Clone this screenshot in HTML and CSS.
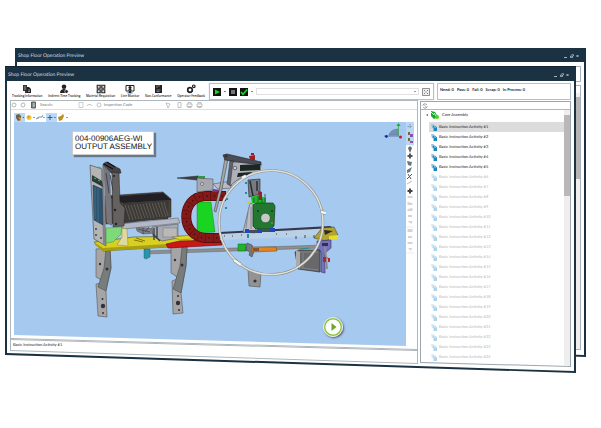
FILE: index.html
```html
<!DOCTYPE html>
<html lang="en">
<head>
    <meta charset="UTF-8">
    <meta name="viewport" content="width=device-width, initial-scale=1.0">
    <title>Shop Floor Operation Preview</title>
    <link rel="stylesheet" href="styles.css">
</head>
<body>

<!-- Shared icons -->
<svg class="sprite" aria-hidden="true">
    <symbol id="doc" viewBox="0 0 7 8">
        <path d="M0 0h3l1 1v4H1z" fill="#9fcbe0"/>
        <path d="M2 2h3l2 2v4H3V4H2z" fill="#1686c4"/>
        <path d="M4 2l2 2H4z" fill="#e3f3fb"/>
    </symbol>
    <symbol id="winbuttons" viewBox="0 0 18 6">
        <path d="M1 4.5h3M13.5 2l2 2m0-2l-2 2" stroke="#c6d2da" stroke-width=".8"/>
        <path d="M7.5 3h2v1.5h-2zM8.500 1.700h2v1.500" fill="none" stroke="#c6d2da" stroke-width=".7"/>
    </symbol>
    <symbol id="printer" viewBox="0 0 7 6">
        <path d="M1 2h5v2.500H1zM2 2V.5h3V2M2 4v1.500h3V4" fill="none" stroke="#aaa" stroke-width=".7"/>
    </symbol>
</svg>

<div class="desktop">
    <section class="window back">
        <header class="titlebar">
            <span>Shop Floor Operation Preview</span>
            <svg class="winbuttons"><use href="#winbuttons"/></svg>
        </header>
        <div class="window-body">
            <div class="back-counter"></div>
            <div class="back-tree"><div class="back-scroll"></div></div>
        </div>
    </section>

    <section class="window front">
        <header class="titlebar">
            <span>Shop Floor Operation Preview</span>
            <svg class="winbuttons"><use href="#winbuttons"/></svg>
        </header>
        <div class="window-body">
            <div class="ribbon">
                <nav class="actions">
                    <button>
                        <svg viewBox="0 0 10 10"><path d="M1 1h4v2h1v6H3V7H1z" fill="#333"/><path d="M5 3h2l2 2v4H5z" fill="#222"/><path d="M2 3h2M2 5h2M6 6h2M6 7.500h2" stroke="#ddd" stroke-width=".6"/></svg>
                        Tracking Information
                    </button>
                    <button>
                        <svg viewBox="0 0 10 10"><circle cx="5" cy="2.800" r="2.300" fill="#222"/><path d="M1 9c0-3 2-4 4-4s3 1 3 4z" fill="#222"/><circle cx="7.500" cy="7.500" r="1.800" fill="#222" stroke="#fff" stroke-width=".6"/></svg>
                        Indirect Time Tracking
                    </button>
                    <button>
                        <svg viewBox="0 0 10 10"><path d="M1.200 1.200h3v3h-3zM5.800 1.200h3v3h-3zM1.200 5.800h3v3h-3zM5.800 5.800h3v3h-3z" fill="#ddd" stroke="#222" stroke-width="1.100"/></svg>
                        Material Requisition
                    </button>
                    <button>
                        <svg viewBox="0 0 10 10"><path d="M1 1.500h8v5.500H1z" fill="#fff" stroke="#222" stroke-width="1"/><circle cx="5" cy="3.500" r="1.500" fill="#222"/><path d="M3 6.500c0-2 4-2 4 0zM4 7h2v1.500h1.500v.8h-5v-.8H4z" fill="#222"/></svg>
                        Line Monitor
                    </button>
                    <button>
                        <svg viewBox="0 0 10 10"><path d="M2 1h7v8H2z" fill="#222"/><path d="M4 1v3M6 1v2M3.500 6h4M3.500 7.500h3" stroke="#bbb" stroke-width=".6"/></svg>
                        Non-Conformance
                    </button>
                    <button>
                        <svg viewBox="0 0 10 10"><circle cx="4" cy="6" r="2.300" fill="none" stroke="#222" stroke-width="1.700"/><circle cx="7.800" cy="2.300" r="1.300" fill="none" stroke="#222" stroke-width="1.200"/></svg>
                        Operator Feedback
                    </button>
                </nav>

                <div class="runbox">
                    <button class="run" aria-label="Start"><svg viewBox="0 0 8 8"><path d="M2 1.500l5 2.500-5 2.500z" fill="#0be01e"/></svg></button>
                    <i class="dot"></i>
                    <button class="run" aria-label="Stop"><svg viewBox="0 0 8 8"><path d="M2 2h4v4H2z" fill="#777"/></svg></button>
                    <button class="run" aria-label="Complete"><svg viewBox="0 0 8 8"><path d="M1 4l2 2.300L7.200 1.500" fill="none" stroke="#0be01e" stroke-width="1.600"/></svg></button>
                    <i class="dot"></i>
                    <select class="runselect" aria-label="Operation"><option></option></select>
                    <button class="expand" aria-label="Full screen"><svg viewBox="0 0 8 8"><path d="M.5.5h7v7h-7z" fill="none" stroke="#777" stroke-width=".8"/><path d="M2 2l1.300 1.300M6 2L4.700 3.300M2 6l1.300-1.300M6 6L4.700 4.700" stroke="#666" stroke-width=".8"/></svg></button>
                </div>

                <div class="counters">
                    <b>Need: 0</b><b>Pass: 0</b><b>Fail: 0</b><b>Scrap: 0</b><b>In Process: 0</b>
                </div>
            </div>

            <div class="workspace">
                <main class="viewer">
                    <div class="sheet">
                        <form class="searchbar">
                            <svg class="nav-icons" viewBox="0 0 26 8"><circle cx="3" cy="4" r="2" fill="none" stroke="#999" stroke-width=".7"/><circle cx="12" cy="4" r="2" fill="none" stroke="#999" stroke-width=".7"/><path d="M20.500 1h4v6h-4z" fill="#888" stroke="#444" stroke-width=".8"/><path d="M22 3h2M22 5h2" stroke="#fff" stroke-width=".6"/></svg>
                            <label for="search">Search:</label>
                            <input id="search" class="search" type="text">
                            <svg class="mid-icons" viewBox="0 0 28 8"><path d="M1 1.500h4v5H1z" fill="none" stroke="#bbb" stroke-width=".7"/><path d="M9 5c1-2 4-2 5 0" fill="none" stroke="#aaa" stroke-width=".8"/><circle cx="21" cy="4" r="2" fill="none" stroke="#aaa" stroke-width=".7"/></svg>
                            <label for="code">Inspection Code</label>
                            <input id="code" class="code" type="text">
                            <svg class="end-icons" viewBox="0 0 38 8"><path d="M1 2l4 1-2 4zM13 1.500h3v5h-3z" fill="none" stroke="#aaa" stroke-width=".7"/><use href="#printer" x="21" y="1" width="7" height="6"/><use href="#printer" x="31" y="1" width="7" height="6"/></svg>
                        </form>
                        <svg class="viewtools" viewBox="0 0 58 9">
                            <path d="M0 0h11v9H0zM32 0h11v9H32z" fill="#b8d8f5"/>
                            <path d="M11.500 0h52" stroke="#e2e2e2" stroke-width=".6"/>
                            <path d="M2 2l3-1 2 2v4L4 8 2 5z" fill="#6d6246"/><path d="M4 4l3 1v3z" fill="#f09b2a"/>
                            <circle cx="15" cy="4.500" r="2.500" fill="#f0c92f"/><circle cx="14.500" cy="4" r="1" fill="#d98d1c"/>
                            <path d="M22 6l3-2h3l1-2" fill="none" stroke="#54799a" stroke-width=".8"/><circle cx="24" cy="5" r="1" fill="#8aa9c2"/>
                            <path d="M36 2v5M33.500 4.500h5" stroke="#33618c" stroke-width="1"/>
                            <path d="M44 4l3-1 2-2 1 2-2 4-3 1z" fill="#bb8d19"/>
                            <path d="M8.500 4h2l-1 1zM19 4h2l-1 1zM29 4h2l-1 1zM40 4h2l-1 1zM52 4h2l-1 1z" fill="#333"/>
                        </svg>
                        <div class="stage">
                            <div class="canvas">
                                <svg class="model" viewBox="14 122 392 224" preserveAspectRatio="xMinYMin slice">
                                    <!-- lower beams -->
                                    <path d="M145 251l178-6v3l-178 6z" fill="#8f8f8d" stroke="#555" stroke-width=".4"/>
                                    <path d="M144 249h6v8l-4 2-2-1z" fill="#2795ad" stroke="#155" stroke-width=".4"/>
                                    <!-- legs -->
                                    <g stroke="#444" stroke-width=".5">
                                        <path d="M96 249l14-1 1 20-5 22 1 27-9-1-2-32 5-1-1-4-4-2z" fill="#a7a4a6"/>
                                        <path d="M106 249l4-1 1 20-5 23-8-4 6-19z" fill="#777c7d"/>
                                        <path d="M171 247l16-1-1 20-5 27 2 20-10 1-1-33 5-2-1-3-5-3z" fill="#a7a4a6"/>
                                        <path d="M182 247l5-1-1 20-5 27-8-4 7-23z" fill="#777c7d"/>
                                        <path d="M248 270l13 3-1 14-11-1z" fill="#929392"/>
                                    </g>
                                    <g fill="#33313b"><circle cx="103" cy="306" r="2.200"/><circle cx="102.500" cy="299" r="1"/><circle cx="103" cy="313" r="1"/><circle cx="178" cy="303" r="2.200"/><circle cx="178" cy="296" r="1"/><circle cx="179" cy="310" r="1"/><circle cx="107" cy="269" r="1.500"/><circle cx="100" cy="264" r="1.200"/><circle cx="182" cy="265" r="1.500"/><circle cx="175" cy="260" r="1.200"/><circle cx="255" cy="281" r="1.600"/></g>
                                    <!-- base plate -->
                                    <path d="M94 242l40-5 58-1 14 2-38 9-65 4z" fill="#d8cf20" stroke="#55500c" stroke-width=".6"/>
                                    <path d="M94 242l9 6 65-4v3l-65 4-8-6z" fill="#a9a011"/>
                                    <path d="M134 240l9 2M136 238l9 3" stroke="#554f10" stroke-width=".7"/>
                                    <path d="M166 244l14-3 42-1v5l-54 3z" fill="#ce1616" stroke="#610808" stroke-width=".6"/>
                                    <!-- tray and supports -->
                                    <path d="M136 227l20 2 1 4-14 1-6-3z" fill="#7e8085" stroke="#333" stroke-width=".4"/>
                                    <path d="M138 229l12 3M143 228v6M149 227l-4 5" stroke="#424554" stroke-width=".8"/>
                                    <path d="M152 227l26-3v14l-16 3-9-5z" fill="#a8aab0" stroke="#444" stroke-width=".5"/>
                                    <path d="M154 228v12M157 227v12M153 234l7 7" stroke="#373c48" stroke-width="1.300"/>
                                    <path d="M163 228h14v9h-14z" fill="#bbb8ba" stroke="#666" stroke-width=".4"/>
                                    <path d="M119 224l59-6 2 5-56 6z" fill="#b5b8c6" stroke="#555" stroke-width=".5"/>
                                    <!-- heat sink block -->
                                    <path d="M105 196l58-4 8 7v18l-47 6-18 1z" fill="#4a423d" stroke="#222" stroke-width=".5"/>
                                    <path d="M110 197l53-4 8 7-48 3z" fill="#211e24"/>
                                    <path d="M123 203l46-3-1 19-44 3z" fill="#3b3936"/>
                                    <path d="M125 205l5 15M128 205l5 15M131 205l5 14M134 204l5 15M137 204l5 15M140 204l5 14M143 204l5 14M146 203l5 15M149 203l5 15M152 203l5 14M155 203l5 14M158 202l5 15M161 202l5 15M164 202l4 14" stroke="#9a917e" stroke-width=".4"/>
                                    <path d="M105 198h7v25h-7z" fill="#5b514a"/>
                                    <!-- tower -->
                                    <path d="M103 164l3-2 14 7 1 4-8 1-10-6z" fill="#45434a" stroke="#222" stroke-width=".5"/>
                                    <path d="M103 165l7 7 2 54-5-3z" fill="#77767d"/>
                                    <path d="M112 172l7 1 1 30 5 5-1 18-11 1z" fill="#64615f" stroke="#222" stroke-width=".5"/>
                                    <path d="M104 164l9 5M107 162l8 5" stroke="#111" stroke-width="1.400"/>
                                    <path d="M110 175l3 15M106 173l3 20" stroke="#343743" stroke-width=".8"/>
                                    <circle cx="114" cy="176" r="1" fill="#222"/><circle cx="115" cy="210" r="1.200" fill="#222"/><circle cx="116" cy="224" r="1.200" fill="#222"/>
                                    <path d="M90 165l12 4 4 77-12-7z" fill="#b4b3b5" stroke="#444" stroke-width=".6"/>
                                    <path d="M101 168l3 1 2 77-3-2z" fill="#858386"/>
                                    <path d="M92 175l10 6 1 6-11-6z" fill="#31373b"/>
                                    <path d="M93 185l9 4 1 36-9-5z" fill="#2c5370" stroke="#173145" stroke-width=".5"/>
                                    <path d="M95 187v32M98 188v34" stroke="#587f96" stroke-width=".6"/>
                                    <path d="M94 178l2 1M98 180l2 1M98 167l3 1" stroke="#37b35b" stroke-width="1.200"/>
                                    <circle cx="96" cy="229" r="1" fill="#444"/><circle cx="96" cy="235" r="1" fill="#444"/><circle cx="101" cy="238" r="1" fill="#444"/>
                                    <path d="M106 228l16-1-1 7-8 8-7 1z" fill="#7ed978" stroke="#38763b" stroke-width=".4"/>
                                    <path d="M122 228l5 1 1 17-11-1 5-8z" fill="#ded99c" stroke="#77734a" stroke-width=".4"/>
                                    <!-- cable chain -->
                                    <path d="M197 202h14l4 30-18 1z" fill="#19d421" stroke="#176b18" stroke-width=".4"/>
                                    <path d="M172 237l20-2 8 3-20 2z" fill="#dfd525" stroke="#666012" stroke-width=".4"/>
                                    <path d="M226 196h-21c-25 1-25 40 0 42h16" fill="none" stroke="#4c0c0d" stroke-width="10"/>
                                    <path d="M226 196h-21c-25 1-25 40 0 42h16" fill="none" stroke="#84191a" stroke-width="8.500"/>
                                    <path d="M226 196h-21c-25 1-25 40 0 42h16" fill="none" stroke="#5a0e0e" stroke-width="8.500" stroke-dasharray=".6 7"/>
                                    <path d="M223 196h-18c-25 1-25 40 0 42h15" fill="none" stroke="#4d0b0b" stroke-width="1.500" stroke-dasharray="1.500 6.100"/>
                                    <!-- pick head -->
                                    <path d="M177 178l21-2 7 2-8 2z" fill="#3d3d44" stroke="#222" stroke-width=".5"/>
                                    <path d="M197 178l16 1v11l-16 2z" fill="#a7a8ae" stroke="#444" stroke-width=".5"/>
                                    <path d="M198 176h7v2h-7z" fill="#2d9a43"/>
                                    <circle cx="202" cy="184" r="1.500" fill="#ddd" stroke="#333" stroke-width=".5"/>
                                    <path d="M213 184l18-3v7l-13 1z" fill="#bbbac5" stroke="#444" stroke-width=".5"/>
                                    <path d="M225 158l3 1-6 30-6 23-2-1 6-25z" fill="#a9a6a1" stroke="#333" stroke-width=".5"/>
                                    <path d="M230 160l4 1-3 25-4-2z" fill="#5f626b" stroke="#333" stroke-width=".5"/>
                                    <path d="M233 162l28 2-1 8-15 4-8 4-7 6z" fill="#b0b0b9" stroke="#333" stroke-width=".5"/>
                                    <path d="M223 155l4-1 34 8v3l-36-5z" fill="#4b4d56" stroke="#222" stroke-width=".6"/>
                                    <path d="M240 165l20-1v6l-20 1zM238 173l14-1-2 4-13 1z" fill="#1c2724"/>
                                    <circle cx="235" cy="168" r="1.800" fill="#ccd" stroke="#333" stroke-width=".6"/><circle cx="226" cy="156" r="1.600" fill="#333"/>
                                    <path d="M249 156l6-1v5h-5zM251 153h3v2h-3z" fill="#9d1f1f"/>
                                    <path d="M213 189l7 1-3 2h-5z" fill="#7b3680"/>
                                    <!-- linear rail -->
                                    <path d="M220 234l103-7 10 3v6l-113 4z" fill="#bad0e6"/>
                                    <path d="M220 232l110-6 4 2-114 6z" fill="#34384b"/>
                                    <path d="M224 236h1M232 236h1M241 235h1M276 234h1M286 234h1M296 236v3M305 235v3M314 235v3" stroke="#444" stroke-width="1"/>
                                    <path d="M322 228l12-1 4 8-12 6-12-3z" fill="#b2a42e" stroke="#333" stroke-width=".5"/>
                                    <path d="M324 230l9 1-8 4z" fill="#292b31"/><path d="M329 236l9-1v4l-9 1z" fill="#e7dc28"/>
                                    <path d="M317 241l14-1v8l-6 5v20l-4-1v-20l-4-2z" fill="#7472ba" stroke="#343168" stroke-width=".6"/>
                                    <path d="M322 243h6v3h-6z" fill="#343050"/>
                                    <path d="M299 250h21v22l-22-3-3-17z" fill="#68686a" stroke="#222" stroke-width=".6"/>
                                    <path d="M296 250l4 2v17l-4-3z" fill="#aaa"/>
                                    <path d="M300 252h18M301 268l17 2M303 253v15" stroke="#939494" stroke-width=".7"/>
                                    <path d="M300 249l9-1" stroke="#2c8c91" stroke-width="1.200"/>
                                    <path d="M325 247l2 22M324 258h4" stroke="#8d8c8f" stroke-width="2"/>
                                    <path d="M323 257h3v5h-3zM328 258h2v4h-2z" fill="#b3252e"/>
                                    <!-- tool carriage -->
                                    <path d="M248 180l12-1v15l-11 3z" fill="#777a81" stroke="#222" stroke-width=".6"/>
                                    <path d="M250 181l3 15M257 181v10" stroke="#2a2c31" stroke-width="1.500"/>
                                    <path d="M250 203l-7 29 12 1 3-27z" fill="#bcbcc3" stroke="#444" stroke-width=".5"/>
                                    <path d="M251 207v22M248 212l-2 16" stroke="#797b84" stroke-width=".8"/>
                                    <path d="M251 197l6-2 9 3v5h-14z" fill="#1dba29"/><path d="M258 191l4 1v8h-3z" fill="#8e262d"/>
                                    <path d="M254 198v5M258 196v6M262 199v5M265 194v8" stroke="#244f2a" stroke-width=".8"/>
                                    <path d="M246 182v2M246 192v2M248 234v4M226 199h2M225 208h2" stroke="#228ca0" stroke-width="2"/>
                                    <path d="M247 202l3 1" stroke="#dbcb26" stroke-width="2"/>
                                    <path d="M253 205l3-2h17l2 3-1 20-3 3h-15l-3-3z" fill="#237831" stroke="#123c1b" stroke-width=".7"/>
                                    <circle cx="265.500" cy="218" r="4.800" fill="#c5c9c8" stroke="#19441f" stroke-width=".6"/>
                                    <circle cx="258" cy="211" r="1" fill="#173b1d"/><circle cx="272" cy="211" r="1" fill="#173b1d"/><circle cx="272" cy="223" r="1" fill="#aa7736"/>
                                    <path d="M245 229h4v4h-4zM257 229h5v4h-5zM270 228h5v4h-5z" fill="#2344bb"/>
                                    <path d="M249 230h8v3h-8zM262 229h8v3h-8z" fill="#484c57"/>
                                    <path d="M238 244h8v7h-8z" fill="#22b32c" stroke="#165f1b" stroke-width=".5"/>
                                    <path d="M247 243l5 2 2 6-2 6-3-2 1-3-4-2z" fill="#747983" stroke="#333" stroke-width=".5"/>
                                    <path d="M252 247h24l1 4-25 1z" fill="#e08424" stroke="#794512" stroke-width=".5"/>
                                    <path d="M253 248h6v3h-6z" fill="#86552d"/>
                                    <!-- highlight ring -->
                                    <circle cx="271" cy="222.500" r="52" fill="none" stroke="#8a8f8e" stroke-width="2.600"/>
                                    <circle cx="271" cy="222.500" r="52" fill="none" stroke="#e0dfd8" stroke-width="1.600"/>
                                    <path d="M242 178l4-2M234 260l7 5M321 212l5 1" stroke="#888" stroke-width="3.600"/>
                                    <path d="M242 178l4-2M234 260l7 5M321 212l5 1" stroke="#f4f3ec" stroke-width="2.600"/>
                                    <!-- axis triad -->
                                    <path d="M389 135c1-4 5-6 9-6v6z" fill="#7290b8" stroke="#52729e" stroke-width=".4"/>
                                    <path d="M386 136h13" stroke="#59617d" stroke-width=".8"/><path d="M398.500 136v-11" stroke="#40a650" stroke-width=".8"/>
                                    <path d="M396.500 126l2-3 2 3z" fill="#09b51e"/><path d="M384 136l3-1v3z" fill="#1725a8"/><circle cx="386.500" cy="136.500" r="1.200" fill="#1725a8"/><circle cx="400.500" cy="137" r="1.500" fill="#c51e2b"/>
                                </svg>
                                <div class="callout">004-00906AEG-WI<br>OUTPUT ASSEMBLY</div>
                                <button class="play" aria-label="Play"><svg viewBox="0 0 20 20"><circle cx="10" cy="10" r="8.500" fill="#fff" stroke="#8cc63f" stroke-width="1.800"/><circle cx="10" cy="10" r="9.500" fill="none" stroke="#eee"/><path d="M8.500 6l5 4-5 4z" fill="#6aa52c"/></svg></button>
                            </div>
                            <svg class="sidetools" viewBox="0 0 8 132">
                                <path d="M0 0h8v23H0z" fill="#b7d7f3"/>
                                <path d="M4 2v5M1.500 4.500h5" stroke="#7797b4" stroke-dasharray="1.500 1"/>
                                <path d="M2 10h2v3H2zM2 16h2v3H2z" fill="#71693d"/><path d="M4 12h3v3H4zM4 19h3v2H4z" fill="#8852ae"/>
                                <path d="M2 26l2-2 2 2-2 5z" fill="#666"/><path d="M4 31.500v5M1.500 34h5" stroke="#555" stroke-width="2"/>
                                <path d="M1 39l5 1-1 4-3-1zM1 48l5-3-2 5-3 1z" fill="#667886"/><path d="M1 57l5-5M2 52l3 5" stroke="#456" stroke-width="1"/>
                                <path d="M1 62l5-3" stroke="#bbb"/><path d="M4 66.500v5M1.500 69h5" stroke="#444" stroke-width="2"/>
                                <path d="M1.500 74h5v2h-5zM1.500 80l5 1v2h-5zM1.500 87l5-1v3h-5zM2 93h4v2H2zM1.500 99h5l-1 3zM1.500 107h5v3h-5zM2 114h4v2H2zM1.500 120h5v2h-5zM2 126h4l-1 3z" fill="#d4d4d4"/>
                                <path d="M0 105h8M0 131h8M0 24h8" stroke="#ddd" stroke-width=".6"/>
                            </svg>
                        </div>
                    </div>
                </main>
                <footer class="status"><div class="status-inner">Basic Instruction Activity #1</div></footer>

                <aside class="tree">
                    <div class="tree-inner">
                        <div class="tree-tools"><svg viewBox="0 0 8 8"><circle cx="4" cy="4" r="2.200" fill="none" stroke="#888" stroke-width=".8" stroke-dasharray="5 1.500"/><path d="M2 2l4 4" stroke="#999" stroke-width=".6"/></svg></div>
                        <div class="tree-area">
                            <div class="tree-list">
                                <div class="root"><svg viewBox="0 0 14 10"><path d="M0 5l2-1v2z" fill="#555"/><path d="M5 1l4 1 3 5-4 2-3-3z" fill="#17a82a"/><path d="M5 2l3 3M8 3l2 3" stroke="#eee"/><circle cx="11" cy="7" r="2" fill="#45d522"/></svg>Core Assembly</div>
                                <ul id="activities"></ul>
                            </div>
                            <div class="scrollbar"><i></i></div>
                        </div>
                    </div>
                </aside>
            </div>
        </div>
    </section>
</div>

<script>
    // Fill the activity tree, later steps are not unlocked yet
    const list = document.getElementById('activities');
    for (let i = 1; i <= 24; i++) {
        const state = i === 1 ? 'selected' : i > 5 ? 'locked' : '';
        list.innerHTML += `<li class="${state}"><a href="#"><svg><use href="#doc"/></svg>Basic Instruction Activity #${i}</a></li>`;
    }
</script>

</body>
</html>
```
FILE: styles.css
```css
* {
    box-sizing: border-box;
}

body {
    margin: 0;
    background-color: #fff;
    color: #222;
    font-family: Lato, "Open Sans", sans-serif;
    font-size: 4px;
    line-height: 4px;
    text-rendering: geometricPrecision;
}

button, input, select {
    font: inherit;
    color: inherit;
    margin: 0;
    padding: 0;
    border: none;
    background: none;
}

svg {
    display: block;
    flex: none;
}

.sprite {
    position: absolute;
    width: 0;
    height: 0;
}

.desktop {
    position: relative;
    padding: 66px 25px 0 5px;
}

/* Windows: the bottom edge drops towards the right */
.window {
    background-color: #1b3242;
    padding: 0 2px 2px;
    clip-path: polygon(0 0, 100% 0, 100% 100%, 0 calc(100% - 18px));
}

.window.front {
    position: relative;
    border-top: 1px solid #12222e;
}

.window.back {
    position: absolute;
    top: 48px;
    left: 15px;
    right: 15px;
    height: 309px;
    display: flex;
    flex-direction: column;
}

.titlebar {
    display: flex;
    align-items: center;
    justify-content: space-between;
    height: 14px;
    padding: 2px 3px 0 1px;
    color: #d5dde2;
    font-size: 5px;
    line-height: 6px;
}

.winbuttons {
    width: 18px;
    height: 6px;
}

.window-body {
    background-color: #fff;
    padding: 2px 3px 7px;
    clip-path: polygon(0 0, 100% 0, 100% 100%, 0 calc(100% - 18px));
}

.back .window-body {
    flex: 1;
    display: flex;
    flex-direction: column;
    gap: 3px;
    padding: 4px 3px 5px;
}

.back-counter {
    height: 16px;
    border: 1px solid #a9b2b8;
}

.back-tree {
    flex: 1;
    display: flex;
    justify-content: flex-end;
    border: 1px solid #a9b2b8;
    padding-top: 7px;
}

.back-scroll {
    width: 5px;
    background: linear-gradient(#b5b5b5, #b5b5b5) 0 4px / 100% 82px no-repeat #eee;
}

/* Ribbon */
.ribbon {
    display: flex;
    height: 17px;
}

.actions {
    display: flex;
    flex: none;
    width: 195px;
    padding: 1px 0 0 2px;
    justify-content: space-between;
    font-family: "Open Sans", "Noto Sans", sans-serif;
    font-size: 3px;
    font-weight: 600;
}

.actions button {
    display: flex;
    flex-direction: column;
    align-items: center;
    justify-content: flex-start;
    white-space: nowrap;
}

.actions svg {
    width: 10px;
    height: 10px;
}

.runbox {
    flex: 1;
    display: flex;
    align-items: center;
    gap: 3px;
    margin-left: 4px;
    padding: 0 3px;
    border: 1px solid #b7c0c6;
    box-shadow: 0 0 1px #b7c0c6;
}

.run {
    width: 8px;
    height: 8px;
    background-color: #101510;
}

.dot {
    width: 2px;
    height: 1px;
    background-color: #888;
}

.runselect {
    flex: 1;
    height: 7px;
    appearance: none;
    border: 1px solid #e0e0e0;
    background: linear-gradient(#999, #999) right 2px center / 2px 1px no-repeat #fff;
}

.expand {
    width: 8px;
    height: 8px;
    background-color: #eee;
}

.counters {
    display: flex;
    gap: 3px;
    width: 134px;
    margin-left: 3px;
    padding: 4px 2px;
    border: 1px solid #b7c0c6;
    color: #222;
    white-space: nowrap;
}

/* Workspace */
.workspace {
    display: grid;
    grid-template-columns: 1fr 151px;
    grid-template-rows: auto 14px;
    column-gap: 2px;
}

.viewer {
    background-color: #aeb7bc;
    padding: 1px;
    clip-path: polygon(0 0, 100% 0, 100% 100%, 0 calc(100% - 11px));
}

.sheet {
    background-color: #fff;
    padding: 0 3px 3px;
    clip-path: polygon(0 0, 100% 0, 100% 100%, 0 calc(100% - 11px));
}

.searchbar {
    display: flex;
    align-items: center;
    height: 9px;
    margin: 0 -3px;
    border-bottom: 1px solid #ddd;
    color: #777;
}

.nav-icons {
    width: 26px;
    height: 8px;
    margin-right: 3px;
}

.mid-icons {
    width: 28px;
    height: 8px;
    margin-right: -2px;
}

.end-icons {
    width: 38px;
    height: 8px;
}

.search {
    width: 25px;
    height: 6px;
}

.code {
    width: 33px;
    height: 6px;
}

.viewtools {
    width: 58px;
    height: 9px;
    margin-top: 3px;
}

.stage {
    display: flex;
}

.canvas {
    position: relative;
    flex: 1;
    height: 224px;
    background-color: #a6c9ef;
    clip-path: polygon(0 0, 100% 0, 100% 100%, 0 calc(100% - 11px));
}

.model {
    width: 100%;
    height: 100%;
}

.callout {
    position: absolute;
    top: 9px;
    left: 58px;
    padding: 3px 1px 3px 2px;
    border: 1px solid #ccc;
    background-color: #fff;
    box-shadow: 2px 2px 1px #66788a;
    color: #111;
    font-family: "Liberation Sans", Arial, sans-serif;
    font-size: 8px;
    line-height: 8px;
    white-space: nowrap;
}

.play {
    position: absolute;
    right: 63px;
    bottom: 9px;
    width: 20px;
    height: 20px;
    border-radius: 50%;
    box-shadow: 1px 1px 2px #556;
}

.sidetools {
    width: 8px;
    height: 132px;
}

.status {
    grid-column: 1;
    margin-top: -11px;
    background-color: #aeb7bc;
    padding: 1px;
    clip-path: polygon(0 0, 100% 11px, 100% 100%, 0 calc(100% - 13px));
}

.status-inner {
    height: 100%;
    padding: 3px 2px;
    background-color: #fff;
    clip-path: polygon(0 0, 100% 11px, 100% 100%, 0 calc(100% - 13px));
}

/* Activity tree */
.tree {
    grid-column: 2;
    grid-row: 1 / 3;
    margin: 1px 0 -3px;
    background-color: #9ba6ad;
    padding: 1px;
    clip-path: polygon(0 0, 100% 0, 100% 100%, 0 calc(100% - 4px));
}

.tree-inner {
    height: 100%;
    display: flex;
    flex-direction: column;
    background-color: #fff;
    clip-path: polygon(0 0, 100% 0, 100% 100%, 0 calc(100% - 4px));
}

.tree-tools {
    height: 8px;
    border-bottom: 1px solid #aeb7bc;
}

.tree-tools svg {
    width: 8px;
    height: 8px;
}

.tree-area {
    flex: 1;
    display: flex;
}

.tree-list {
    flex: 1;
    padding-left: 5px;
}

.root {
    display: flex;
    align-items: center;
    gap: 2px;
    height: 10px;
    margin-bottom: 2px;
}

.root svg {
    width: 14px;
    height: 10px;
}

.tree-list ul {
    list-style: none;
    margin: 0;
    padding: 0 0 0 3px;
}

.tree-list a {
    display: flex;
    align-items: center;
    gap: 2px;
    height: 10px;
    padding-left: 2px;
    color: inherit;
    text-decoration: none;
}

.tree-list a svg {
    width: 6px;
    height: 7px;
}

.selected {
    background-color: #dcdcdc;
}

.locked {
    opacity: 0.35;
}

.scrollbar {
    width: 6px;
    padding-top: 5px;
    background-color: #eee;
}

.scrollbar i {
    display: block;
    height: 81px;
    background-color: #b8b8b8;
}
```
